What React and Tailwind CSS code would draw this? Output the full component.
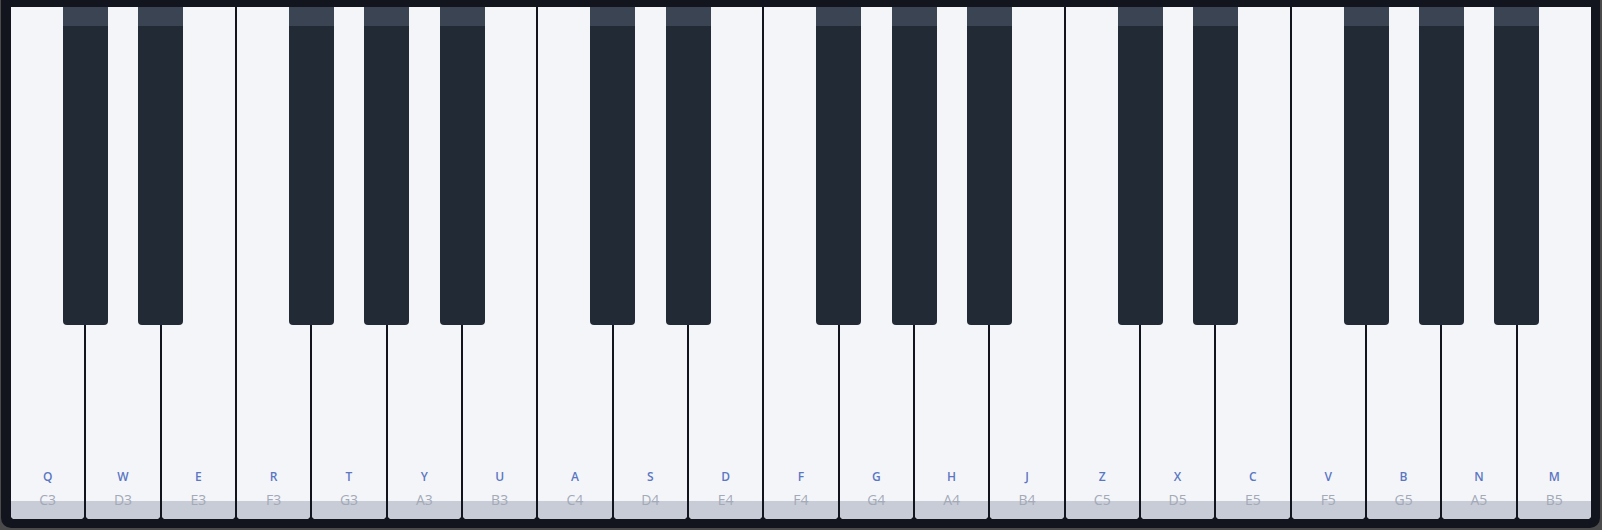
import React from "react";

const WHITE = [
  ["Q", "C3"], ["W", "D3"], ["E", "E3"], ["R", "F3"], ["T", "G3"], ["Y", "A3"], ["U", "B3"],
  ["A", "C4"], ["S", "D4"], ["D", "E4"], ["F", "F4"], ["G", "G4"], ["H", "A4"], ["J", "B4"],
  ["Z", "C5"], ["X", "D5"], ["C", "E5"], ["V", "F5"], ["B", "G5"], ["N", "A5"], ["M", "B5"],
];

const BLACK_BOUNDARIES = [];
for (let o = 0; o < 3; o++) {
  [1, 2, 4, 5, 6].forEach((k) => BLACK_BOUNDARIES.push(k + o * 7));
}

export default function App() {
  return (
    <div className="w-[1602px] h-[530px] bg-[#4b4b4b] pl-[1px] pr-[2px] pb-[2px]" style={{ fontFamily: '"Open Sans", "Noto Sans", sans-serif' }}>
      <div className="h-[528px] bg-[#12151e] rounded-b-[10px] pt-[7px] pl-[10px] pr-[9px] pb-[9px]">
        <div className="relative h-[512px] flex gap-[2px]">
          {WHITE.map(([k, n]) => (
            <div key={n} className="relative flex-1 rounded-b-[4px] bg-[#f4f5f9] overflow-hidden flex flex-col items-center justify-end pb-[10px]">
              <div className="absolute left-0 right-0 bottom-0 h-[18px] bg-[#c7ccd7]" />
              <span className="relative text-[12px] leading-[16px] font-semibold text-[#5b77c2]">{k}</span>
              <span className="relative mt-[6px] text-[14px] leading-[18px] text-[#a3a9b6]">{n}</span>
            </div>
          ))}
          {BLACK_BOUNDARIES.map((b) => (
            <div
              key={b}
              className="absolute top-0 w-[45px] h-[318px] bg-[#222a35] rounded-b-[4px] overflow-hidden"
              style={{ left: `calc(${b} * (100% + 2px) / 21 - 1px - 22.5px)` }}
            >
              <div className="h-[19px] bg-[#3a4452]" />
            </div>
          ))}
        </div>
      </div>
    </div>
  );
}
